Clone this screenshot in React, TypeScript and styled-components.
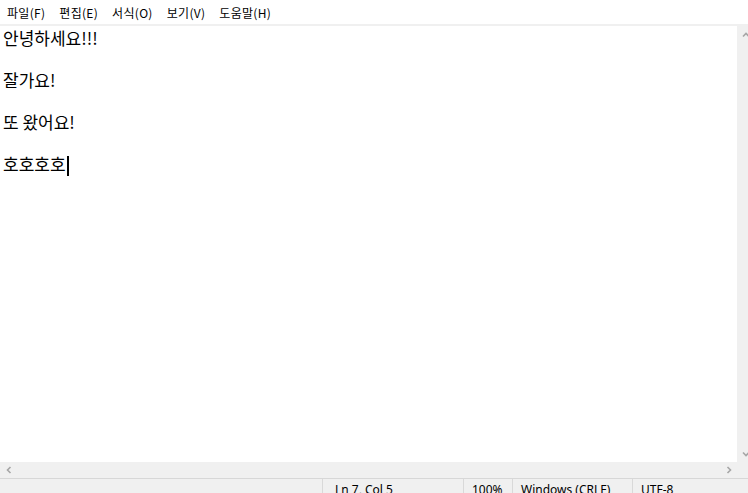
import styled, { createGlobalStyle } from "styled-components";

const GlobalStyle = createGlobalStyle`
  html, body {
    margin: 0;
    padding: 0;
    overflow: hidden;
    background: #ffffff;
  }
`;

const Window = styled.div`
  width: 754px;
  height: 500px;
  display: flex;
  flex-direction: column;
  background: #ffffff;
  font-family: "Noto Sans CJK KR", "Noto Sans", sans-serif;
  color: #000000;
`;

const MenuBar = styled.div`
  height: 24px;
  display: flex;
  align-items: flex-end;
  border-bottom: 2px solid #f0f0f0;
  box-sizing: content-box;
`;

const MenuItem = styled.div`
  padding: 0 7px 1px 7px;
  font-size: 12px;
  line-height: 20px;
  letter-spacing: 0.3px;
`;

const EditorRow = styled.div`
  display: flex;
  height: 436px;
`;

const TextArea = styled.div`
  flex: 1;
  padding: 1px 0 0 3px;
  font-size: 17px;
  line-height: 21px;
  white-space: pre;
`;

const Line = styled.div`
  height: 21px;
`;

const Caret = styled.span`
  display: inline-block;
  width: 2px;
  height: 20px;
  background: #000000;
  vertical-align: -5px;
  margin-left: 1px;
`;

const VScroll = styled.div`
  width: 17px;
  background: #f0f0f0;
  display: flex;
  flex-direction: column;
  justify-content: space-between;
  align-items: center;
`;

const HScroll = styled.div`
  height: 16px;
  display: flex;
  background: #f0f0f0;
  border-bottom: 1px solid #d7d7d7;
`;

const HTrack = styled.div`
  width: 737px;
  display: flex;
  justify-content: space-between;
  align-items: center;
`;

const ArrowBox = styled.div`
  width: 17px;
  height: 17px;
  display: flex;
  align-items: center;
  justify-content: center;
`;

const StatusBar = styled.div`
  flex: 1;
  display: flex;
  background: #f0f0f0;
  font-family: "Noto Sans", "Liberation Sans", sans-serif;
  font-size: 12px;
`;

const StatusCell = styled.div<{ w?: number; pl: number }>`
  ${(p) => (p.w ? `width: ${p.w}px;` : "flex: 1;")}
  padding-left: ${(p) => p.pl}px;
  padding-top: 2px;
  border-left: 1px solid #d9d9d9;
  box-sizing: border-box;
  line-height: 18px;
  white-space: nowrap;
`;

const Spacer = styled.div`
  width: 322px;
`;

function Chevron({ dir }: { dir: "up" | "down" | "left" | "right" }) {
  const rot = { up: 0, right: 90, down: 180, left: 270 }[dir];
  return (
    <svg width="8" height="8" viewBox="0 0 8 8" style={{ transform: `rotate(${rot}deg)` }}>
      <path d="M1 5.5 L4 2.5 L7 5.5" fill="none" stroke="#a6a6a6" strokeWidth="1.6" />
    </svg>
  );
}

const lines = ["안녕하세요!!!", "", "잘가요!", "", "또 왔어요!", "", "호호호호"];

function App() {
  return (
    <>
      <GlobalStyle />
      <Window>
        <MenuBar>
          <MenuItem>파일(F)</MenuItem>
          <MenuItem>편집(E)</MenuItem>
          <MenuItem>서식(O)</MenuItem>
          <MenuItem>보기(V)</MenuItem>
          <MenuItem>도움말(H)</MenuItem>
        </MenuBar>
        <EditorRow>
          <TextArea>
            {lines.map((text, i) => (
              <Line key={i}>
                {text}
                {i === lines.length - 1 && <Caret />}
              </Line>
            ))}
          </TextArea>
          <VScroll>
            <ArrowBox>
              <Chevron dir="up" />
            </ArrowBox>
            <ArrowBox>
              <Chevron dir="down" />
            </ArrowBox>
          </VScroll>
        </EditorRow>
        <HScroll>
          <HTrack>
            <ArrowBox>
              <Chevron dir="left" />
            </ArrowBox>
            <ArrowBox>
              <Chevron dir="right" />
            </ArrowBox>
          </HTrack>
        </HScroll>
        <StatusBar>
          <Spacer />
          <StatusCell w={141} pl={12}>Ln 7, Col 5</StatusCell>
          <StatusCell w={49} pl={8}>100%</StatusCell>
          <StatusCell w={120} pl={8}>Windows (CRLF)</StatusCell>
          <StatusCell pl={8}>UTF-8</StatusCell>
        </StatusBar>
      </Window>
    </>
  );
}

export default App;
